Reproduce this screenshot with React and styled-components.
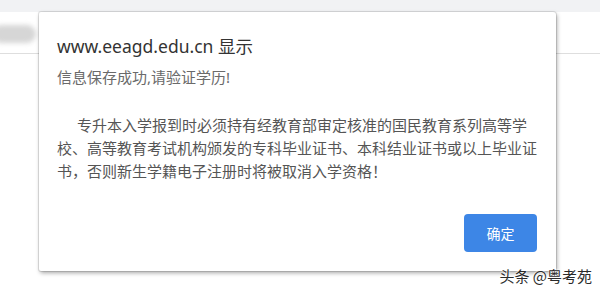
import React from "react";
import styled, { createGlobalStyle } from "styled-components";

const GlobalStyle = createGlobalStyle`
  html, body {
    margin: 0;
    padding: 0;
    background: #ffffff;
  }
  body {
    font-family: "Noto Sans", "Noto Sans CJK SC", sans-serif;
  }
`;

const Page = styled.div`
  position: relative;
  width: 600px;
  height: 290px;
  overflow: hidden;
  background: #ffffff;
`;

const TabStrip = styled.div`
  height: 12px;
  background: #f1f2f4;
`;

const Toolbar = styled.div`
  height: 41px;
  border-bottom: 1px solid #dedede;
  display: flex;
  align-items: center;
`;

const BlurredChip = styled.div`
  width: 44px;
  height: 18px;
  margin-left: -8px;
  margin-top: 2px;
  border-radius: 9px;
  background: #d6d6d6;
  filter: blur(2.5px);
`;

const Dialog = styled.div`
  position: absolute;
  left: 39px;
  top: 12px;
  width: 517px;
  height: 259px;
  box-sizing: border-box;
  padding: 22px 19px 19px 18px;
  background: #ffffff;
  border-radius: 2px 3px 2px 2px;
  box-shadow: 0 0 0 1px rgba(0, 0, 0, 0.1), 1px 2px 4px rgba(0, 0, 0, 0.35);
  display: flex;
  flex-direction: column;
  font-family: "Noto Sans", "Noto Sans CJK SC", sans-serif;
`;

const Title = styled.div`
  font-size: 17.5px;
  line-height: 24px;
  color: #333333;
`;

const Message = styled.div`
  margin-top: 9px;
  font-size: 15px;
  line-height: 20px;
  color: #6a6a6a;
`;

const Body = styled.p`
  margin: 27px 0 0 0;
  width: 480px;
  font-size: 15px;
  line-height: 23px;
  color: #555555;
  text-indent: 20px;
`;

const Footer = styled.div`
  margin-top: auto;
  display: flex;
  justify-content: flex-end;
`;

const OkButton = styled.button`
  width: 73px;
  height: 38px;
  border: none;
  border-radius: 4px;
  background: #3d86e6;
  color: #ffffff;
  font-family: "Noto Sans CJK SC", sans-serif;
  font-size: 14px;
  padding: 0;
`;

const Watermark = styled.div`
  position: absolute;
  right: 8px;
  bottom: 4px;
  font-family: "Noto Sans CJK SC", sans-serif;
  font-size: 15px;
  line-height: 20px;
  color: #2a2a2a;
  text-shadow: 0 0 2px #ffffff, 0 0 2px #ffffff;
`;

export default function App() {
  return (
    <>
      <GlobalStyle />
      <Page>
        <TabStrip />
        <Toolbar>
          <BlurredChip />
        </Toolbar>
        <Dialog>
          <Title>www.eeagd.edu.cn 显示</Title>
          <Message>信息保存成功,请验证学历!</Message>
          <Body>
            专升本入学报到时必须持有经教育部审定核准的国民教育系列高等学校、高等教育考试机构颁发的专科毕业证书、本科结业证书或以上毕业证书，否则新生学籍电子注册时将被取消入学资格！
          </Body>
          <Footer>
            <OkButton>确定</OkButton>
          </Footer>
        </Dialog>
        <Watermark>头条 @粤考苑</Watermark>
      </Page>
    </>
  );
}
